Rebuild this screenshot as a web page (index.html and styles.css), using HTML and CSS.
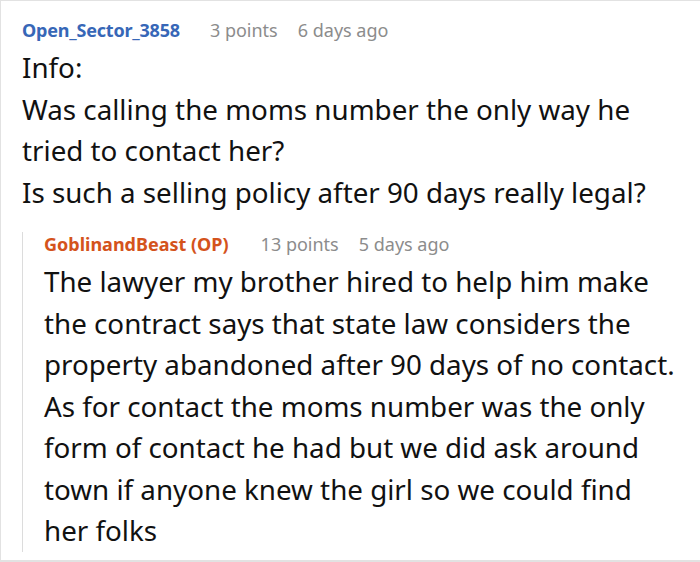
FILE: index.html
```html
<!DOCTYPE html>
<html lang="en">
<head>
<meta charset="utf-8">
<title>Comments</title>
<link rel="stylesheet" href="styles.css">
</head>
<body>
<div class="thread">
  <div class="comment">
    <div class="meta">
      <span class="author">Open_Sector_3858</span>
      <span class="info">3 points</span>
      <span class="info">6 days ago</span>
    </div>
    <div class="body">
      <p>Info:</p>
      <p>Was calling the moms number the only way he tried to contact her?</p>
      <p>Is such a selling policy after 90 days really legal?</p>
    </div>
    <div class="reply">
      <div class="meta">
        <span class="author op">GoblinandBeast (OP)</span>
        <span class="info">13 points</span>
        <span class="info">5 days ago</span>
      </div>
      <div class="body">
        <p>The lawyer my brother hired to help him make the contract says that state law considers the property abandoned after 90 days of no contact. As for contact the moms number was the only form of contact he had but we did ask around town if anyone knew the girl so we could find her folks</p>
      </div>
    </div>
  </div>
</div>
</body>
</html>
```
FILE: styles.css
```css
html, body {
  margin: 0;
  padding: 0;
  background: #ffffff;
}
body {
  font-family: "Noto Sans", "Open Sans", sans-serif;
  color: #111111;
}
.thread {
  box-sizing: border-box;
  width: 720px;
  height: 562px;
  border: 1px solid #e2e2e2;
  border-bottom-width: 2px;
  padding: 17px 0 0 21px;
  overflow: hidden;
}
.comment {
  width: 658px;
}
.meta {
  display: flex;
  font-size: 18px;
  line-height: 24px;
  margin-bottom: 5px;
  white-space: nowrap;
}
.author {
  font-weight: 700;
  color: #3767b7;
  margin-right: 30px;
  letter-spacing: -0.2px;
}
.author.op {
  color: #d4531c;
  margin-right: 32px;
  letter-spacing: 0;
}
.info {
  color: #8c8c8c;
  margin-right: 20px;
}
.body {
  font-size: 27.75px;
  line-height: 41.5px;
}
.body p {
  margin: 0;
}
.reply {
  margin-top: 30px;
  border-left: 1px solid #dcdcdc;
  padding-left: 21px;
}
.reply .meta {
  margin-top: -11px;
}
.reply .body {
  margin-bottom: -9px;
}
```
